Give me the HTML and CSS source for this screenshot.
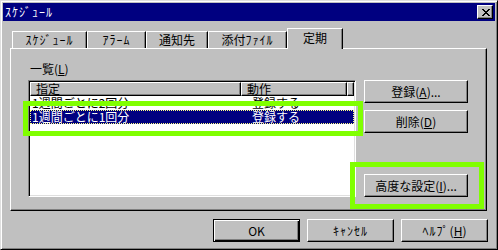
FILE: index.html
```html
<!DOCTYPE html>
<html lang="ja">
<head>
<meta charset="utf-8">
<title>ｽｹｼﾞｭｰﾙ</title>
<link rel="stylesheet" href="styles.css">
</head>
<body>
<div class="window">
  <div class="titlebar">
    <span class="title hw">ｽｹｼﾞｭｰﾙ</span>
    <span class="close"><svg width="8" height="7" viewBox="0 0 8 7"><path d="M0 0h2v1H0zM6 0h2v1H6zM1 1h2v1H1zM5 1h2v1H5zM2 2h4v1H2zM3 3h2v1H3zM2 4h4v1H2zM1 5h2v1H1zM5 5h2v1H5zM0 6h2v1H0zM6 6h2v1H6z" fill="#000"/></svg></span>
  </div>
  <div class="content">
    <div class="tabs">
      <div class="tab tab-schedule"><span class="hw">ｽｹｼﾞｭｰﾙ</span></div>
      <div class="tab tab-alarm"><span class="hw">ｱﾗｰﾑ</span></div>
      <div class="tab tab-notify">通知先</div>
      <div class="tab tab-attach">添付<span class="hw">ﾌｧｲﾙ</span></div>
      <div class="tab tab-regular active">定期</div>
    </div>
    <div class="panel">
      <div class="list-label">一覧(<u>L</u>)</div>
      <div class="listbox">
        <div class="lv-header">
          <div class="hcell col1">指定</div>
          <div class="hcell col2">動作</div>
          <div class="hcell col3"></div>
        </div>
        <div class="lv-row">
          <span class="cell col1">1週間ごとに2回分</span>
          <span class="cell col2">登録する</span>
        </div>
        <div class="lv-row selected">
          <span class="cell col1">1週間ごとに1回分</span>
          <span class="cell col2">登録する</span>
        </div>
      </div>
      <div class="side-buttons">
        <div class="btn">登録(<u>A</u>)...</div>
        <div class="btn">削除(<u>D</u>)</div>
        <div class="btn btn-advanced">高度な設定(<u>I</u>)...</div>
      </div>
    </div>
    <div class="footer">
      <div class="btn btn-wide default">OK</div>
      <div class="btn btn-wide"><span class="hw">ｷｬﾝｾﾙ</span></div>
      <div class="btn btn-wide"><span class="hw">ﾍﾙﾌﾟ</span>(<u>H</u>)</div>
    </div>
  </div>
  <div class="mark mark-rows"></div>
  <div class="mark mark-advanced"></div>
</div>
</body>
</html>
```
FILE: styles.css
```css
html, body {
  margin: 0;
  padding: 0;
}

body {
  background: #c0c0c0;
  font-family: "Noto Sans CJK JP", "Noto Sans", sans-serif;
  font-size: 12px;
  color: #000;
}

.hw {
  letter-spacing: 1px;
}

.window {
  position: relative;
  width: 498px;
  height: 250px;
  box-sizing: border-box;
  border: 1px solid;
  border-color: #dfdfdf #000 #000 #dfdfdf;
  box-shadow: inset 1px 1px #fff, inset -1px -1px #808080;
  padding: 2px;
  background: #c0c0c0;
  display: flex;
  flex-direction: column;
}

.titlebar {
  height: 18px;
  background: #000080;
  color: #fff;
  display: flex;
  align-items: center;
  justify-content: space-between;
  padding: 0 2px;
}

.title {
  line-height: 18px;
}

.close {
  width: 16px;
  height: 14px;
  box-sizing: border-box;
  background: #c0c0c0;
  border: 1px solid;
  border-color: #fff #000 #000 #fff;
  box-shadow: inset -1px -1px #808080;
  display: flex;
  align-items: center;
  justify-content: center;
  padding-left: 1px;
}

.close svg {
  display: block;
}

.content {
  display: flex;
  flex-direction: column;
  padding: 7px 7px 0 7px;
}

.tabs {
  display: flex;
  align-items: flex-end;
  height: 20px;
  padding-left: 2px;
  position: relative;
  z-index: 1;
}

.tab {
  box-sizing: border-box;
  height: 17px;
  border-top: 1px solid #fff;
  border-left: 1px solid #fff;
  border-right: 1px solid #000;
  box-shadow: inset -1px 0 #808080;
  text-align: center;
  line-height: 15px;
}

.tab-schedule { width: 75px; }
.tab-alarm { width: 59px; }
.tab-notify { width: 62px; }
.tab-attach { width: 79px; }

.tab.active {
  width: 56px;
  height: 21px;
  margin-bottom: -1px;
  background: #c0c0c0;
  line-height: 18px;
}

.panel {
  box-sizing: border-box;
  width: 477px;
  height: 163px;
  border-top: 1px solid #fff;
  border-left: 1px solid #fff;
  border-right: 1px solid #000;
  border-bottom: 1px solid #000;
  box-shadow: inset -1px -1px #808080;
  padding: 13px 0 13px 17px;
  display: grid;
  grid-template-columns: 328px 104px;
  grid-template-rows: 14px 1fr;
  column-gap: 8px;
  row-gap: 4px;
}

.list-label {
  grid-column: 1;
  grid-row: 1;
  line-height: 14px;
  padding-left: 2px;
}

.listbox {
  grid-column: 1;
  grid-row: 2;
  box-sizing: border-box;
  background: #fff;
  border: 1px solid;
  border-color: #808080 #fff #fff #808080;
  box-shadow: inset 1px 1px #000, inset -1px -1px #dfdfdf;
  padding: 1px;
  display: flex;
  flex-direction: column;
}

.lv-header {
  display: flex;
  height: 14px;
}

.hcell {
  box-sizing: border-box;
  background: #c0c0c0;
  border-top: 1px solid #fff;
  border-left: 1px solid #fff;
  border-right: 1px solid #000;
  border-bottom: 1px solid #000;
  box-shadow: inset -1px -1px #808080;
  line-height: 12px;
  padding-left: 5px;
}

.hcell.col1 { width: 215px; }
.hcell.col2 { width: 108px; }
.hcell.col3 { flex: 1; }

.lv-row {
  display: flex;
  height: 14px;
  line-height: 14px;
  box-sizing: border-box;
}

.cell.col1 {
  width: 215px;
  padding-left: 2px;
  box-sizing: border-box;
}

.cell.col2 {
  padding-left: 7px;
}

.lv-row.selected {
  background: #000080;
  color: #fff;
  outline: 1px dotted #ffff80;
  outline-offset: -1px;
}

.side-buttons {
  grid-column: 2;
  grid-row: 2;
  display: flex;
  flex-direction: column;
  gap: 7px;
}

.btn {
  box-sizing: border-box;
  height: 23px;
  background: #c0c0c0;
  border-top: 1px solid #fff;
  border-left: 1px solid #fff;
  border-right: 1px solid #000;
  border-bottom: 1px solid #000;
  box-shadow: inset -1px -1px #808080;
  display: flex;
  align-items: center;
  justify-content: center;
  line-height: 14px;
}

.btn-advanced {
  margin-top: auto;
}

.footer {
  display: flex;
  justify-content: flex-end;
  gap: 7px;
  margin-top: 8px;
}

.btn-wide {
  width: 87px;
}

.btn.default {
  border: 1px solid #000;
  box-shadow: inset 1px 1px #fff, inset -1px -1px #000, inset -2px -2px #808080;
}

.mark {
  position: absolute;
  box-sizing: border-box;
  border: 5px solid #80ff00;
  pointer-events: none;
  z-index: 5;
}

.mark-rows {
  left: 22px;
  top: 100px;
  width: 340px;
  height: 35px;
}

.mark-advanced {
  left: 349px;
  top: 161px;
  width: 134px;
  height: 47px;
}
```
